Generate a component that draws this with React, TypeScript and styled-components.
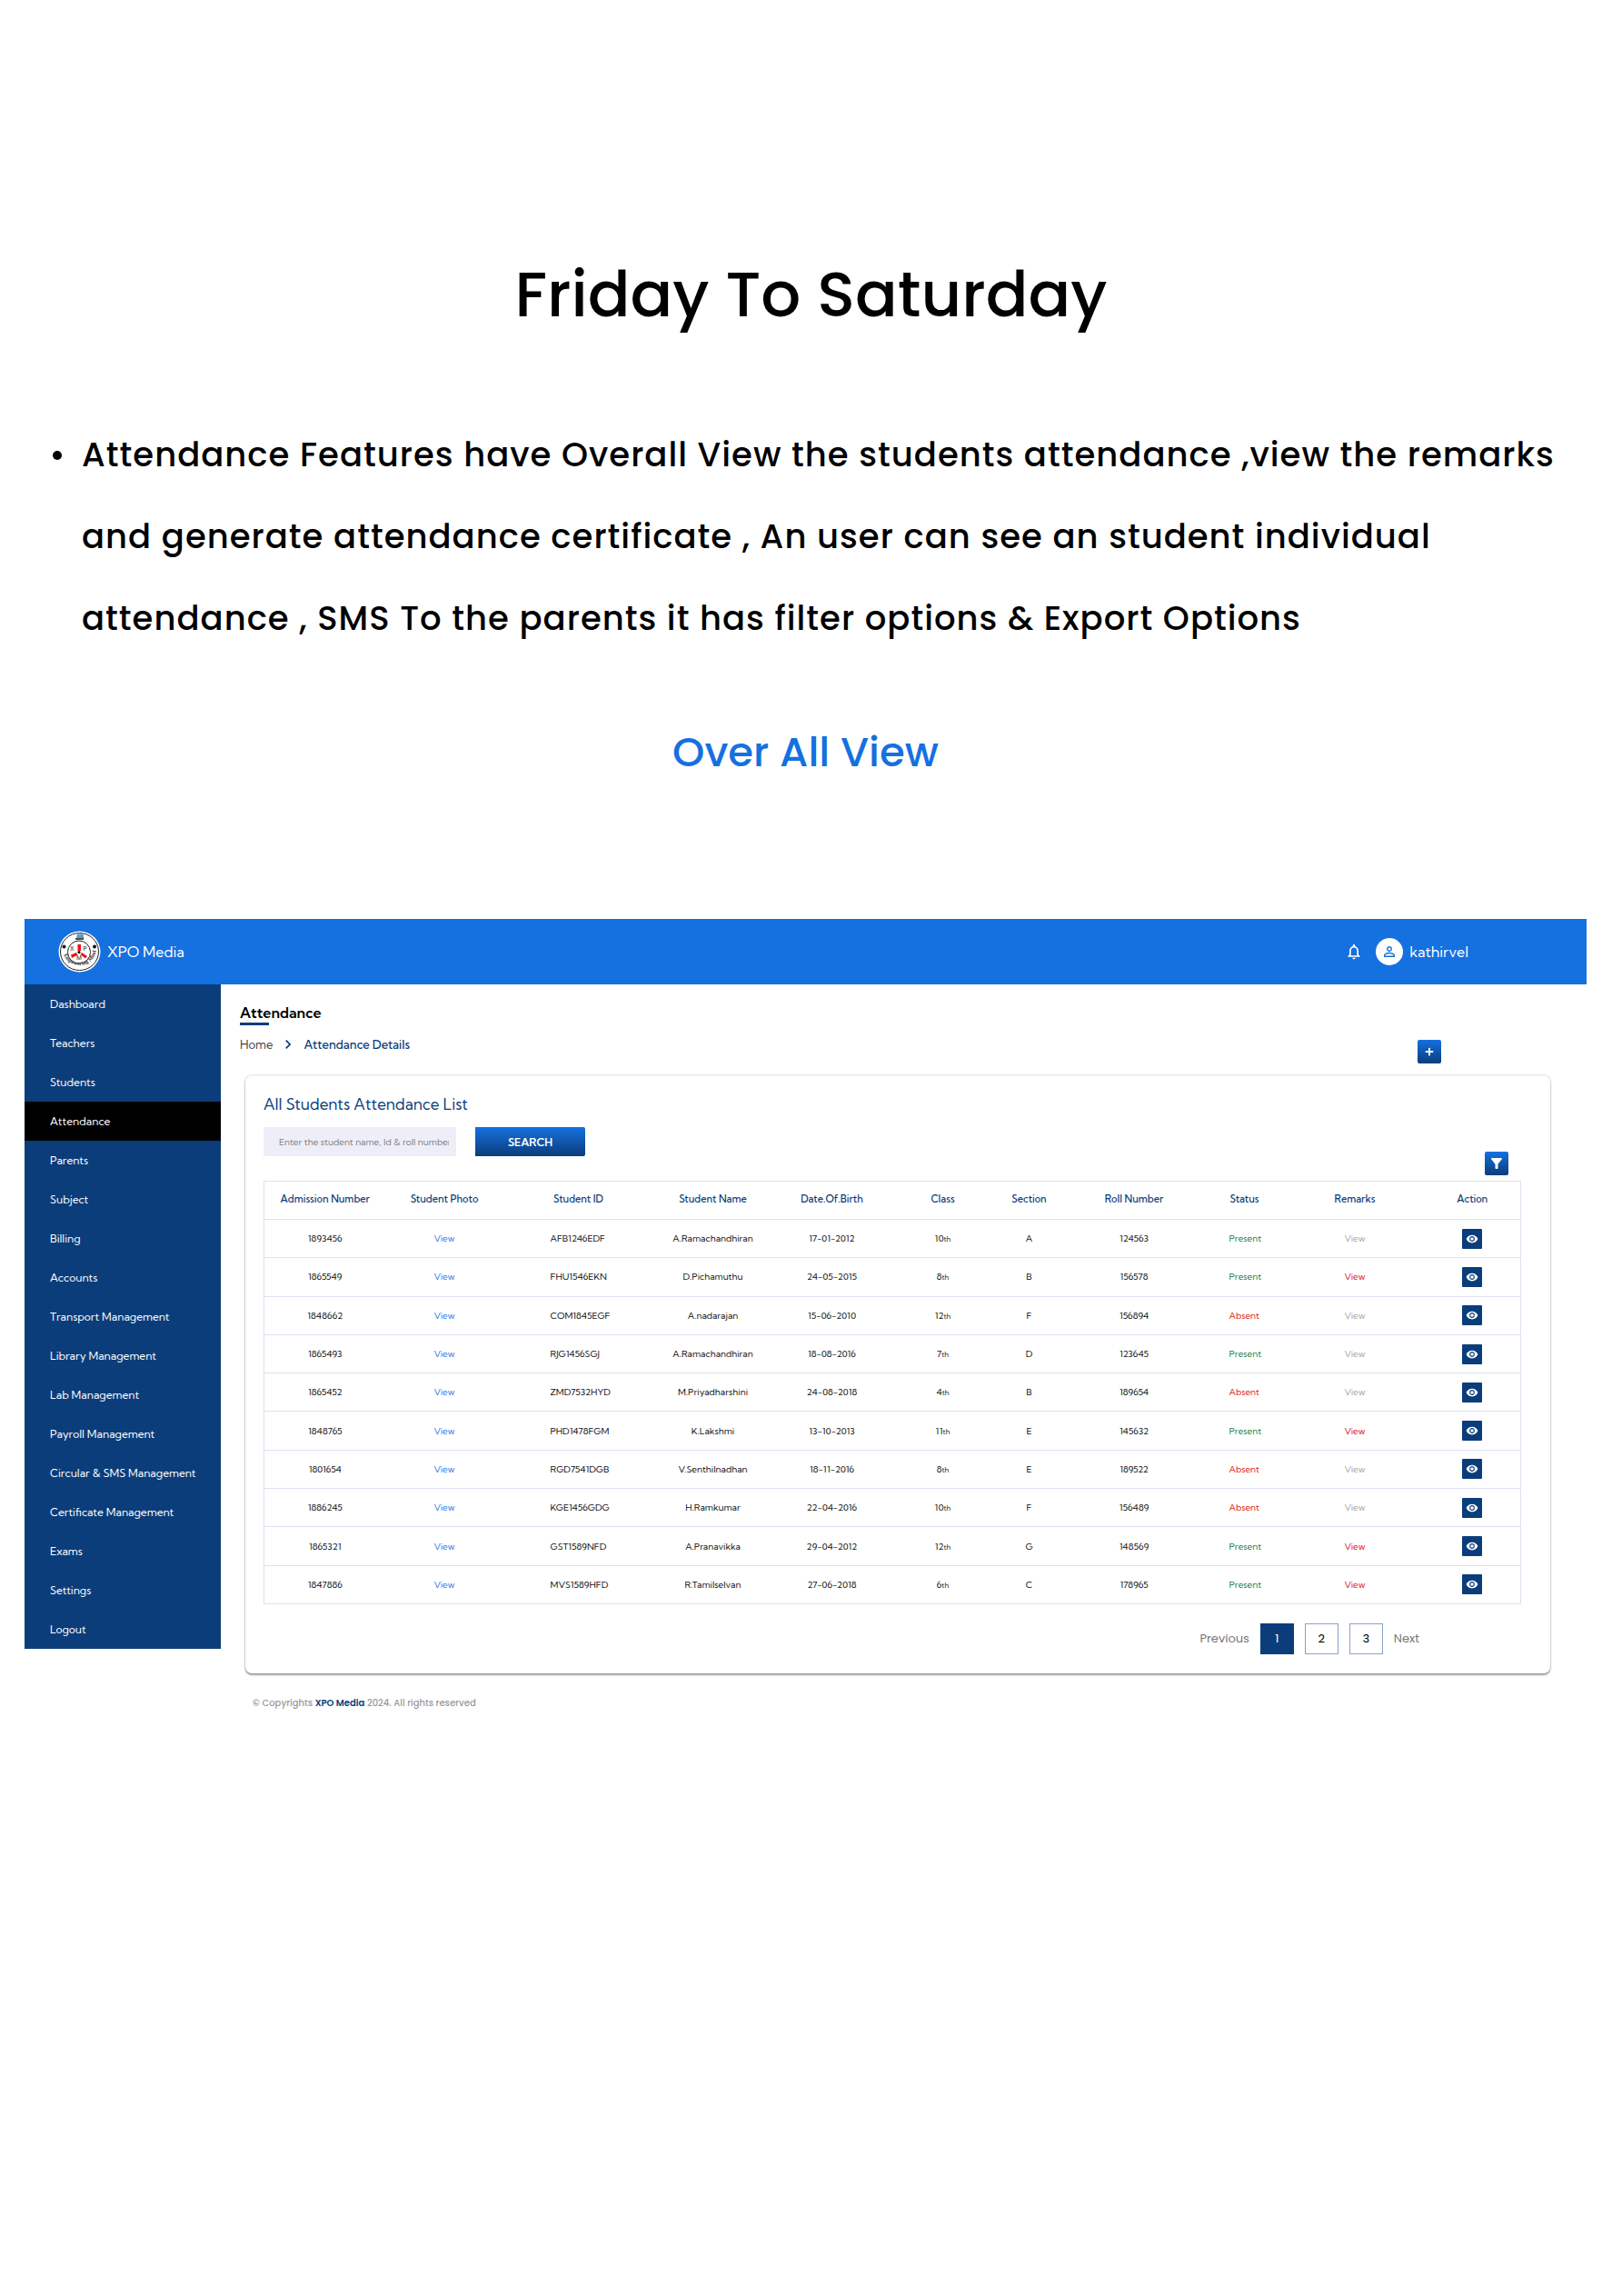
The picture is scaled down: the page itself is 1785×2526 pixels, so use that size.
import React from "react";
import styled, { createGlobalStyle, css } from "styled-components";
import { FaPlus } from "react-icons/fa";
import {
  MdChevronRight,
  MdFilterAlt,
  MdNotificationsNone,
  MdPersonOutline,
  MdVisibility,
} from "react-icons/md";

const color = {
  blue: "#1570e0",
  navy: "#0b3d7a",
  line: "#e0e0f0",
  field: "#eeeef8",
  link: "#2f80ed",
  green: "#168243",
  red: "#e01b22",
  muted: "#a9a9a9",
};

const display = `Poppins, Inter, "Noto Sans", sans-serif`;
const ui = `"Kumbh Sans", Lato, "Open Sans", sans-serif`;

const GlobalStyle = createGlobalStyle`
  *, *::before, *::after { box-sizing: border-box; }
  body { margin: 0; background: #fff; color: #000; font-family: ${ui}; }
  h1, h2, h3, p, ul { margin: 0; padding: 0; }
  ul { list-style: none; }
  a { color: inherit; text-decoration: none; }
  button, input { font: inherit; border: 0; padding: 0; }
  button { cursor: pointer; }
`;

const Page = styled.div`
  min-height: 100vh;
  padding-top: 274px;
`;

const Title = styled.h1`
  font: 500 69px/100px ${display};
  text-align: center;
`;

const Features = styled.ul`
  margin-top: 81px;
  padding: 0 57px 0 58px;
  font: 500 37px/90px ${display};
  letter-spacing: 1px;
`;

const Feature = styled.li`
  display: grid;
  grid-template-columns: 10px 1fr;
  column-gap: 22px;

  &::before {
    content: "";
    width: 10px;
    height: 10px;
    margin-top: 41px;
    border-radius: 50%;
    background: #000;
  }
`;

const Subtitle = styled.h2`
  margin-top: 73px;
  padding: 0 39px 0 27px;
  font: 500 45px/60px ${display};
  text-align: center;
  color: ${color.blue};
`;

const Shell = styled.div`
  margin: 153px 39px 0 27px;
`;

const TopBar = styled.header`
  display: flex;
  align-items: center;
  justify-content: space-between;
  height: 72px;
  padding: 0 130px 0 37px;
  background: ${color.blue};
  color: #fff;
  font-size: 16px;
`;

const Brand = styled.a`
  display: flex;
  align-items: center;
  gap: 7px;
`;

const Account = styled.div`
  display: flex;
  align-items: center;
  gap: 14px;
`;

const BellButton = styled.button`
  display: flex;
  background: none;
  color: inherit;
`;

const User = styled.a`
  display: flex;
  align-items: center;
  gap: 7px;
`;

const Avatar = styled.span`
  display: grid;
  place-items: center;
  width: 30px;
  height: 30px;
  border-radius: 50%;
  background: #fff;
  color: ${color.blue};
`;

const Body = styled.div`
  display: flex;
  align-items: flex-start;
`;

const Sidebar = styled.nav`
  flex: 0 0 216px;
  background: ${color.navy};
`;

const NavLink = styled.a<{ $active?: boolean }>`
  display: block;
  padding-left: 28px;
  font-size: 12px;
  line-height: 43px;
  color: #fff;
  background: ${(p) => (p.$active ? "#000" : "transparent")};
`;

const Main = styled.main`
  flex: 1;
  min-width: 0;
  padding: 20px 40px 0 21px;
`;

const PageHead = styled.div`
  display: flex;
  justify-content: space-between;
  align-items: flex-end;
  padding-right: 120px;
`;

const Heading = styled.h2`
  font-size: 16px;
  line-height: 22px;
  font-weight: 600;

  &::after {
    content: "";
    display: block;
    width: 32px;
    height: 3px;
    background: ${color.navy};
  }
`;

const Crumbs = styled.nav`
  display: flex;
  align-items: center;
  gap: 7px;
  margin-top: 11px;
  font-size: 13px;
  line-height: 20px;
  font-weight: 500;
  color: ${color.navy};
`;

const HomeLink = styled.a`
  font-weight: 400;
  color: #444;
`;

const gradient = css`
  background: linear-gradient(${color.blue}, ${color.navy});
  color: #fff;
`;

const IconButton = styled.button`
  ${gradient}
  display: grid;
  place-items: center;
  width: 26px;
  height: 26px;
  border-radius: 2px;
`;

const AddSlot = styled.div`
  display: flex;
  margin-bottom: -11px;
`;

const Card = styled.section`
  margin: 24px 0 0 6px;
  padding: 20px 34px 21px 20px;
  border-radius: 7px;
  border-top: 1px solid #f4f4f4;
  box-shadow: 0 2px 2px 0 rgba(0, 0, 0, 0.36), 0 0 2px rgba(0, 0, 0, 0.3);
`;

const CardTitle = styled.h3`
  font-size: 17px;
  line-height: 22px;
  font-weight: 400;
  color: ${color.navy};
`;

const Search = styled.form`
  display: flex;
  gap: 21px;
  margin-top: 14px;
`;

const SearchField = styled.input`
  width: 212px;
  height: 32px;
  padding: 0 8px 0 17px;
  border-radius: 2px 0 0 2px;
  background: ${color.field};
  font-size: 10px;

  &::placeholder {
    color: #808080;
    opacity: 1;
  }
`;

const SearchButton = styled.button`
  ${gradient}
  width: 121px;
  height: 32px;
  border-radius: 0 2px 2px 0;
  font-size: 12px;
  font-weight: 600;
`;

const Tools = styled.div`
  display: flex;
  justify-content: flex-end;
  margin: -5px 12px 6px 0;
`;

const Table = styled.table`
  width: 100%;
  height: 466px;
  table-layout: fixed;
  border-collapse: collapse;
  border: 1px solid ${color.line};
  font-size: 10px;
`;

const Th = styled.th`
  height: 42px;
  padding: 0 0 4px;
  border-bottom: 1px solid ${color.line};
  font-size: 11px;
  font-weight: 500;
  color: ${color.navy};
`;

const Td = styled.td<{ $indent?: number; $tone?: string }>`
  padding: 0 0 0 ${(p) => p.$indent ?? 0}px;
  border-bottom: 1px solid ${color.line};
  text-align: ${(p) => (p.$indent ? "left" : "center")};
  color: ${(p) => p.$tone ?? "#111"};
`;

const Ordinal = styled.small`
  font-size: 8px;
`;

const EyeButton = styled.button`
  display: inline-grid;
  place-items: center;
  width: 22px;
  height: 22px;
  border-radius: 1px;
  background: ${color.navy};
  color: #fff;
  vertical-align: middle;
`;

const Pager = styled.nav`
  display: flex;
  justify-content: flex-end;
  align-items: center;
  gap: 12px;
  margin-top: 21px;
  padding-right: 110px;
  font: 400 13px/20px ${display};
  color: #777;
`;

const PageButton = styled.button<{ $current?: boolean }>`
  width: 37px;
  height: 34px;
  border: 1px solid ${(p) => (p.$current ? color.navy : "#86a3c8")};
  background: ${(p) => (p.$current ? color.navy : "#fff")};
  color: ${(p) => (p.$current ? "#fff" : "#000")};
`;

const StepButton = styled.button`
  background: none;
  color: inherit;
`;

const Footer = styled.footer`
  margin: 23px 0 0 14px;
  font: 500 10px/20px ${display};
  color: #999;
`;

const FooterBrand = styled.strong`
  font-weight: 600;
  color: ${color.navy};
`;

const Logo = () => (
  <svg width="47" height="46" viewBox="0 0 94 92" overflow="visible" aria-hidden="true">
    <ellipse cx="47" cy="46" rx="46" ry="45" fill="#fff" />
    <ellipse cx="47" cy="46" rx="42" ry="41" fill="none" stroke="#222" strokeWidth="2" />
    <circle cx="46" cy="47" r="25" fill="none" stroke="#222" strokeWidth="2" />
    <path d="M42 7h13l2 10H40z" fill="#5b9bd0" />
    <path d="M38 16h18v4H38z" fill="#4a4f58" />
    <path d="M43 30h7v14h-7zM28 53l12-5 3 5-13 7zM52 48l12 8-4 5-11-9z" fill="#f40d14" />
    <circle cx="46" cy="47" r="3" fill="#000" />
    <circle cx="13" cy="35" r="4" fill="#111" />
    <circle cx="80" cy="35" r="4" fill="#111" />
    <g fontFamily="Inter, sans-serif" fontSize="13" fill="#222">
      <text x="26" y="43">X</text>
      <text x="55" y="43">P</text>
      <text x="40" y="64">M</text>
    </g>
    <path id="motto" d="M10 45a37 37 0 0 0 73 0" fill="none" />
    <text fontFamily="Liberation Serif, serif" fontSize="12" fontWeight="700" fill="#333">
      <textPath href="#motto" startOffset="8">Empowering Mind</textPath>
    </text>
  </svg>
);

const sections = [
  "Dashboard", "Teachers", "Students", "Attendance", "Parents", "Subject",
  "Billing", "Accounts", "Transport Management", "Library Management",
  "Lab Management", "Payroll Management", "Circular & SMS Management",
  "Certificate Management", "Exams", "Settings", "Logout",
];

const columns: [string, number][] = [
  ["Admission Number", 134],
  ["Student Photo", 129],
  ["Student ID", 166],
  ["Student Name", 130],
  ["Date.Of.Birth", 132],
  ["Class", 112],
  ["Section", 78],
  ["Roll Number", 153],
  ["Status", 90],
  ["Remarks", 153],
  ["Action", 106],
];

type Student = {
  admission: string;
  id: string;
  name: string;
  born: string;
  grade: number;
  section: string;
  roll: string;
  present: boolean;
  remark: boolean;
};

const student = (
  admission: string, id: string, name: string, born: string, grade: number,
  section: string, roll: string, present: boolean, remark: boolean,
): Student => ({ admission, id, name, born, grade, section, roll, present, remark });

const students: Student[] = [
  student("1893456", "AFB1246EDF", "A.Ramachandhiran", "17-01-2012", 10, "A", "124563", true, false),
  student("1865549", "FHU1546EKN", "D.Pichamuthu", "24-05-2015", 8, "B", "156578", true, true),
  student("1848662", "COM1845EGF", "A.nadarajan", "15-06-2010", 12, "F", "156894", false, false),
  student("1865493", "RJG1456SGJ", "A.Ramachandhiran", "18-08-2016", 7, "D", "123645", true, false),
  student("1865452", "ZMD7532HYD", "M.Priyadharshini", "24-08-2018", 4, "B", "189654", false, false),
  student("1848765", "PHD1478FGM", "K.Lakshmi", "13-10-2013", 11, "E", "145632", true, true),
  student("1801654", "RGD7541DGB", "V.Senthilnadhan", "18-11-2016", 8, "E", "189522", false, false),
  student("1886245", "KGE1456GDG", "H.Ramkumar", "22-04-2016", 10, "F", "156489", false, false),
  student("1865321", "GST1589NFD", "A.Pranavikka", "29-04-2012", 12, "G", "148569", true, true),
  student("1847886", "MVS1589HFD", "R.Tamilselvan", "27-06-2018", 6, "C", "178965", true, true),
];

const StudentRow = ({ s }: { s: Student }) => (
  <tr>
    <Td>{s.admission}</Td>
    <Td $tone={color.link}><a href="#photo">View</a></Td>
    <Td $indent={52}>{s.id}</Td>
    <Td>{s.name}</Td>
    <Td>{s.born}</Td>
    <Td>{s.grade}<Ordinal>th</Ordinal></Td>
    <Td>{s.section}</Td>
    <Td>{s.roll}</Td>
    <Td $indent={28} $tone={s.present ? color.green : color.red}>
      {s.present ? "Present" : "Absent"}
    </Td>
    <Td $tone={s.remark ? color.red : color.muted}><a href="#remark">View</a></Td>
    <Td>
      <EyeButton type="button" aria-label={`Open ${s.name}`}>
        <MdVisibility size={14} />
      </EyeButton>
    </Td>
  </tr>
);

export default function App() {
  return (
    <Page>
      <GlobalStyle />
      <Title>Friday To Saturday</Title>
      <Features>
        <Feature>
          Attendance Features have Overall View the students attendance ,view the
          remarks and generate attendance certificate , An user can see an student
          individual attendance , SMS To the parents it has filter options &amp;
          Export Options
        </Feature>
      </Features>
      <Subtitle>Over All View</Subtitle>

      <Shell>
        <TopBar>
          <Brand href="#home">
            <Logo />
            XPO Media
          </Brand>
          <Account>
            <BellButton type="button" aria-label="Notifications">
              <MdNotificationsNone size={20} />
            </BellButton>
            <User href="#account">
              <Avatar><MdPersonOutline size={18} /></Avatar>
              kathirvel
            </User>
          </Account>
        </TopBar>

        <Body>
          <Sidebar aria-label="Sections">
            {sections.map((name) => (
              <NavLink key={name} href="#section" $active={name === "Attendance"}>
                {name}
              </NavLink>
            ))}
          </Sidebar>

          <Main>
            <PageHead>
              <div>
                <Heading>Attendance</Heading>
                <Crumbs aria-label="Breadcrumb">
                  <HomeLink href="#home">Home</HomeLink>
                  <MdChevronRight size={20} />
                  <a href="#details">Attendance Details</a>
                </Crumbs>
              </div>
              <AddSlot>
                <IconButton type="button" aria-label="Add">
                  <FaPlus size={10} />
                </IconButton>
              </AddSlot>
            </PageHead>

            <Card>
              <CardTitle>All Students Attendance List</CardTitle>
              <Search>
                <SearchField
                  aria-label="Search students"
                  placeholder="Enter the student name, Id & roll number"
                />
                <SearchButton type="button">SEARCH</SearchButton>
              </Search>
              <Tools>
                <IconButton type="button" aria-label="Filter"><MdFilterAlt size={18} /></IconButton>
              </Tools>

              <Table>
                <colgroup>
                  {columns.map(([label, width]) => (
                    <col key={label} width={width} />
                  ))}
                </colgroup>
                <thead>
                  <tr>
                    {columns.map(([label]) => (
                      <Th key={label} scope="col">{label}</Th>
                    ))}
                  </tr>
                </thead>
                <tbody>
                  {students.map((s) => (
                    <StudentRow key={s.admission} s={s} />
                  ))}
                </tbody>
              </Table>

              <Pager aria-label="Pages">
                <StepButton type="button">Previous</StepButton>
                <PageButton type="button" $current>1</PageButton>
                <PageButton type="button">2</PageButton>
                <PageButton type="button">3</PageButton>
                <StepButton type="button">Next</StepButton>
              </Pager>
            </Card>

            <Footer>
              © Copyrights <FooterBrand>XPO Media</FooterBrand> 2024. All rights reserved
            </Footer>
          </Main>
        </Body>
      </Shell>
    </Page>
  );
}
